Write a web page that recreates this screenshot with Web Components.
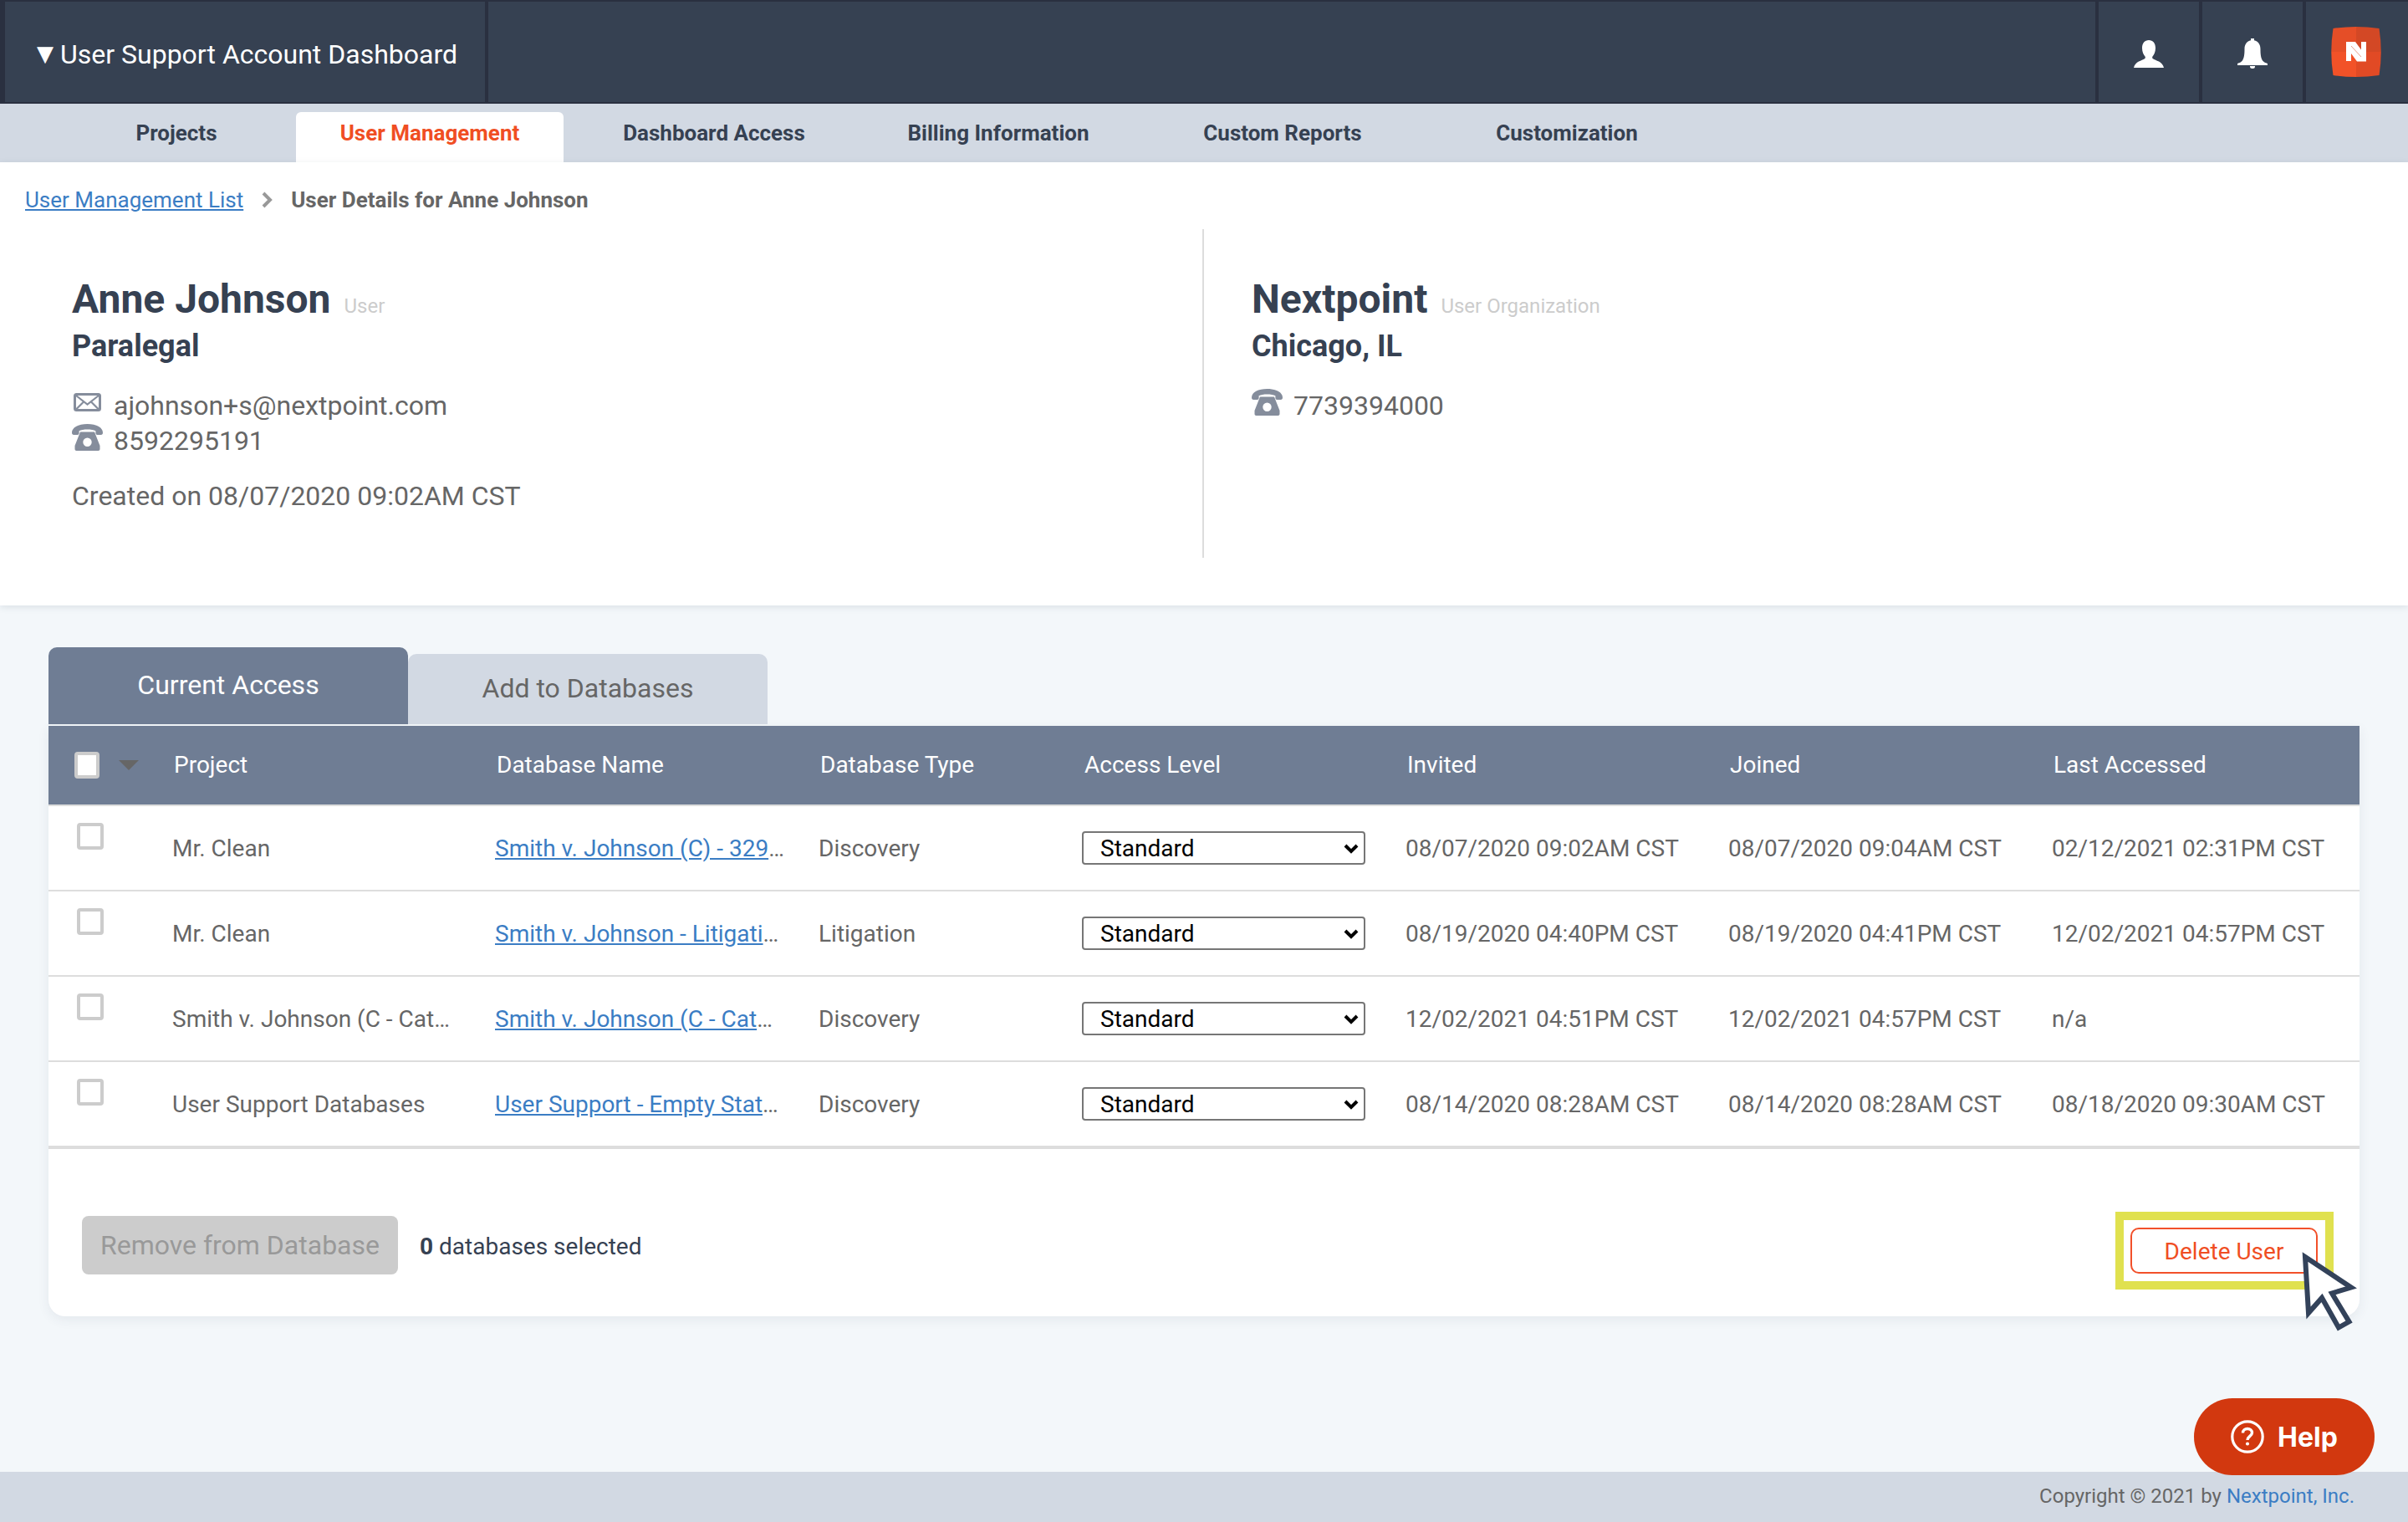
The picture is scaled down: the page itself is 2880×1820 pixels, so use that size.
<!DOCTYPE html>
<html lang="en"><head><meta charset="utf-8"><title>User Details</title>
<style>
html,body{margin:0;padding:0}
body{width:2880px;height:1820px;display:flex;flex-direction:column;font-family:Roboto,"Liberation Sans",sans-serif;background:#f3f7fa;position:relative;overflow:hidden}
</style></head><body>
<np-topbar title-text="User Support Account Dashboard"></np-topbar>
<np-nav>
  <np-nav-tab first>Projects</np-nav-tab>
  <np-nav-tab active>User Management</np-nav-tab>
  <np-nav-tab>Dashboard Access</np-nav-tab>
  <np-nav-tab>Billing Information</np-nav-tab>
  <np-nav-tab>Custom Reports</np-nav-tab>
  <np-nav-tab>Customization</np-nav-tab>
</np-nav>
<np-details>
  <np-breadcrumb slot="crumb" link="User Management List" current="User Details for Anne Johnson"></np-breadcrumb>
  <np-card slot="left" name="Anne Johnson" kind="User" sub="Paralegal">
    <np-contact icon="mail">ajohnson+s@nextpoint.com</np-contact>
    <np-contact icon="phone">8592295191</np-contact>
    <np-created>Created on 08/07/2020 09:02AM CST</np-created>
  </np-card>
  <np-card slot="right" name="Nextpoint" kind="User Organization" sub="Chicago, IL">
    <np-contact icon="phone">7739394000</np-contact>
  </np-card>
</np-details>
<np-main>
  <np-subtabs></np-subtabs>
  <np-panel>
    <np-thead></np-thead>
    <np-row project="Mr. Clean" db="Smith v. Johnson (C) - 329" type="Discovery" invited="08/07/2020 09:02AM CST" joined="08/07/2020 09:04AM CST" last="02/12/2021 02:31PM CST"></np-row>
    <np-row project="Mr. Clean" db="Smith v. Johnson - Litigati" type="Litigation" invited="08/19/2020 04:40PM CST" joined="08/19/2020 04:41PM CST" last="12/02/2021 04:57PM CST"></np-row>
    <np-row project="Smith v. Johnson (C - Cat…" db="Smith v. Johnson (C - Cat" type="Discovery" invited="12/02/2021 04:51PM CST" joined="12/02/2021 04:57PM CST" last="n/a"></np-row>
    <np-row project="User Support Databases" db="User Support - Empty Stat" type="Discovery" invited="08/14/2020 08:28AM CST" joined="08/14/2020 08:28AM CST" last="08/18/2020 09:30AM CST" final></np-row>
    <np-actions></np-actions>
  </np-panel>
</np-main>
<np-footer></np-footer>
<np-help></np-help>
<script>
const COLS='148px 386px 387px 316px 386px 386px 387px 368px';
function def(name,render){
  customElements.define(name,class extends HTMLElement{
    connectedCallback(){
      if(this.shadowRoot)return;
      this.attachShadow({mode:'open'}).innerHTML=render(this);
    }
  });
}
const a=(el,n)=>el.getAttribute(n)||'';
const ICONS={
 mail:`<svg width="33" height="22" viewBox="0 0 33 22" fill="none" stroke="#858d9c" style="margin:0 0 5px 2px"><rect x="1.500" y="1.500" width="30" height="19" rx="2" stroke-width="3"/><path d="M3 3 16.500 13.500 30 3M3 19.500 12 10.500M30 19.500 21 10.500" stroke-width="2.200"/></svg>`,
 phone:`<svg width="37" height="32" viewBox="0 0 37 32" fill="#858d9c"><path d="M0 10.500C0 4 8 0 18.500 0S37 4 37 10.500c0 1.600-.8 2.500-2.200 2.500h-4.400c-1.300 0-2-.8-2-2V8.300C26 7 22.500 6.500 18.500 6.500S11 7 8.600 8.300V11c0 1.200-.7 2-2 2H2.200C.8 13 0 12.100 0 10.500Z"/><path fill-rule="evenodd" d="M10 9.500h17L33.500 26v4c0 1.200-.8 2-2 2H5.500c-1.200 0-2-.8-2-2v-4ZM18.500 16.500a5.200 5.200 0 1 0 0 10.400 5.200 5.200 0 0 0 0-10.400Z"/></svg>`
};
def('np-topbar',el=>`<style>
:host{display:flex;height:124px;box-sizing:border-box;background:#2a3040;padding:2px 0 2px 6px;gap:4px;color:#fff;flex:none}
.c{background:#364152;display:flex;align-items:center;justify-content:center;width:120px;flex:none;box-sizing:border-box}
.t{width:574px;justify-content:flex-start;padding:6px 0 0 38px;font-size:32px;line-height:40px}
.a{font:26px "DejaVu Sans",sans-serif;margin-right:8px;position:relative;top:-1px}
.g{flex:1;width:auto}.l{width:122px}
.i{padding-top:4px}
</style>
<div class="c t"><span class="a">▼</span><span>${a(el,'title-text')}</span></div>
<div class="c g"></div>
<div class="c i"><svg width="36" height="33" viewBox="0 0 36 33" fill="#fff"><path d="M18 0c-5 0-8 3.800-8 9.500 0 4.500 1.800 8 3.500 10 .5.800.5 2-.5 2.800C10 24.500 1.500 25.500 0 33h36c-1.500-7.500-10-8.500-13-10.700-1-.8-1-2-.5-2.800 1.700-2 3.500-5.500 3.500-10C26 3.800 23 0 18 0Z"/></svg></div>
<div class="c i"><svg width="36" height="36" viewBox="0 0 36 36" fill="#fff"><path d="M16 0h4v2.300c4.800 1 7.500 5 7.500 10.200 0 6 .5 11.500 3 14.500 1 1.200 3 2.200 5.500 3v2H0v-2c2.500-.8 4.500-1.800 5.500-3 2.500-3 3-8.500 3-14.500C8.500 7.300 11.200 3.300 16 2.300Z"/><path d="M15 33h6v.500a3 2.500 0 0 1-6 0Z"/></svg></div>
<div class="c l"><svg width="60" height="60" viewBox="0 0 60 60" style="margin-right:2px"><defs><clipPath id="p"><path d="M2.500 2Q30-2 57.500 2 62 30 57.500 58 30 62 2.500 58-2 30 2.500 2Z"/></clipPath></defs><g clip-path="url(#p)"><rect width="30" height="30" fill="#e54e27"/><rect x="30" width="30" height="30" fill="#d34825"/><rect y="30" width="30" height="30" fill="#f25228"/><rect x="30" y="30" width="30" height="30" fill="#e14a25"/></g><path d="M18 18H29L36 27.500V18H42V41.500H31L24 32V41H18Z" fill="#fff"/><path d="M24 23 36 36" stroke="#e8a08c" stroke-width="1" fill="none"/></svg></div>`);
def('np-nav',()=>`<style>:host{display:flex;height:70px;box-sizing:border-box;padding:10px 0 0 88px;gap:20px;background:#d2d9e3;flex:none}</style><slot></slot>`);
def('np-nav-tab',el=>`<style>
:host{display:flex;width:${el.hasAttribute('first')?246:320}px;height:60px;box-sizing:border-box;padding-bottom:11px;align-items:center;justify-content:center;font-size:26px;font-weight:700;color:${el.hasAttribute('active')?'#f04e23':'#364152'};background:${el.hasAttribute('active')?'#fff':'transparent'};border-radius:6px 6px 0 0}
</style><slot></slot>`);
def('np-details',()=>`<style>
:host{display:block;height:530px;box-sizing:border-box;background:#fff;box-shadow:0 2px 8px rgba(50,65,85,.12);flex:none;position:relative;padding-top:26px;--ci:1px}
.cols{display:flex;margin-top:16px;height:393px}
.l{width:1438px;box-sizing:border-box;padding-left:86px}
.r{flex:1;border-left:2px solid #ddd;padding-left:57px}
</style><slot name="crumb"></slot><div class="cols"><div class="l"><slot name="left"></slot></div><div class="r"><slot name="right"></slot></div></div>`);
def('np-breadcrumb',el=>`<style>
:host{display:flex;align-items:center;height:38px;padding-left:30px;font-size:26px;color:#666}
a{color:#3b7dc4;text-decoration:underline}
svg{margin:0 22px 0 21px}
b{font-weight:700}
</style><a href="#">${a(el,'link')}</a><svg width="14" height="22" viewBox="0 0 14 22"><path d="M3 3l8 8-8 8" fill="none" stroke="#999" stroke-width="4"/></svg><b>${a(el,'current')}</b>`);
def('np-card',el=>`<style>
:host{display:block;padding-top:54px}
.h{display:flex;align-items:baseline;height:60px;line-height:60px;font-size:48px;font-weight:700;color:#364152}
.k{font-size:24px;font-weight:400;color:#ccc;margin-left:16px}
.s{font-size:36px;font-weight:700;line-height:44px;margin-top:4px;color:#364152;margin-bottom:28px}
</style><div class="h"><span>${a(el,'name')}</span><span class="k">${a(el,'kind')}</span></div><div class="s">${a(el,'sub')}</div><slot></slot>`);
def('np-contact',el=>`<style>
:host{display:flex;height:42px;line-height:42px;font-size:32px;color:#666;position:relative;margin-left:var(--ci)}
.i{width:50px;flex:none;display:flex;align-items:flex-end;height:33px;margin-left:-1px}
</style><span class="i">${ICONS[a(el,'icon')]}</span><span><slot></slot></span>`);
def('np-created',()=>`<style>:host{display:block;line-height:42px;font-size:32px;color:#666;margin-top:24px}</style><slot></slot>`);
def('np-main',()=>`<style>:host{display:block;flex:1;padding:50px 58px 0;box-sizing:border-box}</style><slot></slot>`);
def('np-subtabs',()=>`<style>
:host{display:flex;align-items:flex-end;height:92px;margin-bottom:2px}
div{box-sizing:border-box;text-align:center;line-height:40px;font-size:32px;border-radius:10px 10px 0 0}
.on{width:430px;height:92px;background:#6f7d94;color:#fff;padding-top:25px}
.off{width:430px;height:84px;background:#d2d9e3;color:#666;padding-top:21px}
</style><div class="on">Current Access</div><div class="off">Add to Databases</div>`);
def('np-panel',()=>`<style>:host{display:block;background:#fff;border-radius:0 0 20px 20px;box-shadow:0 4px 14px rgba(50,65,85,.08);height:706px}</style><slot></slot>`);
def('np-thead',()=>`<style>
:host{display:grid;grid-template-columns:${COLS};height:96px;box-sizing:border-box;background:#6f7d94;border-bottom:2px solid #ddd;color:#fff;font-size:28px;align-items:center}
span{padding:0 0 2px 2px}
.s{padding:0;display:flex;align-items:center}
.b{width:30px;height:32px;box-sizing:border-box;background:#fff;border:4px solid #ccc;border-radius:4px;margin-left:31px}
.t{width:0;height:0;border:12px solid transparent;border-top-color:#666;border-bottom:0;margin-left:23px}
</style><div class="s"><div class="b"></div><div class="t"></div></div><span>Project</span><span>Database Name</span><span>Database Type</span><span>Access Level</span><span>Invited</span><span>Joined</span><span>Last Accessed</span>`);
def('np-row',el=>`<style>
:host{display:grid;grid-template-columns:${COLS};height:102px;box-sizing:border-box;border-bottom:${el.hasAttribute('final')?4:2}px solid #ddd;font-size:28px;color:#666;align-items:center;${el.hasAttribute('final')?'height:104px':''}}
.c{width:32px;height:32px;box-sizing:border-box;border:4px solid #ccc;border-radius:4px;margin:20px 0 0 34px;align-self:start}
a{color:#3b7dc4;text-decoration:underline}
select{appearance:none;-webkit-appearance:none;width:339px;height:40px;box-sizing:border-box;border:2px solid #767676;border-radius:4px;background:#fff;color:#000;font:28px Roboto,sans-serif;padding:0 0 0 20px;display:block}
.w{position:relative;width:339px;margin-left:-1px}
.w svg{position:absolute;right:8px;top:15px}
</style><div class="c"></div><span>${a(el,'project')}</span><span><a href="#">${a(el,'db')}</a>…</span><span>${a(el,'type')}</span>
<div class="w"><select><option>Standard</option></select><svg width="18" height="12" viewBox="0 0 18 12"><path d="M2 2l7 7 7-7" fill="none" stroke="#000" stroke-width="4"/></svg></div>
<span>${a(el,'invited')}</span><span>${a(el,'joined')}</span><span>${a(el,'last')}</span>`);
def('np-actions',()=>`<style>
:host{display:flex;align-items:flex-start;padding:75px 31px 0 40px}
.r{height:70px;width:378px;box-sizing:border-box;margin-top:5px;background:#ccc;border-radius:8px;color:#999;font-size:32px;display:flex;align-items:center;justify-content:center;font-weight:400}
.n{height:70px;margin:6px auto 0 26px;display:flex;align-items:center;font-size:28px;color:#364152;white-space:pre}
b{font-weight:700}
.f{position:relative;border:10px solid #e0e14f;box-sizing:border-box;width:261px;height:93px;padding:9px 8px;background:#fff}
.d{width:224px;height:55px;box-sizing:border-box;border:2px solid #f2502a;border-radius:10px;color:#f04e23;font-size:28px;display:flex;align-items:center;justify-content:center;padding-top:1px}
svg{position:absolute;left:210px;top:35px}
</style><div class="r">Remove from Database</div><div class="n"><b>0</b> databases selected</div><div class="f"><div class="d">Delete User</div><svg width="75" height="101" viewBox="0 0 75 101"><path d="M7 9 62 45.500 39 52.500 59.500 86.500 47 93.500 27 58 11 76Z" fill="#fff" stroke="#33425a" stroke-width="6"/></svg></div>`);
def('np-footer',()=>`<style>
:host{display:flex;height:60px;box-sizing:border-box;flex:none;background:#d2d9e3;justify-content:flex-end;align-items:center;padding:0 64px 2px 0;font-size:24px;color:#666}
a{color:#3b7dc4;text-decoration:none}
</style><span>Copyright © 2021 by <a href="#">Nextpoint, Inc.</a></span>`);
def('np-help',()=>`<style>
:host{position:absolute;left:2624px;top:1672px;width:216px;height:92px;border-radius:46px;background:#d2380f;color:#fff;display:flex;align-items:center;box-sizing:border-box;padding-left:44px;font:700 32px Inter,Roboto,sans-serif}
svg{margin-right:16px}
</style><svg width="40" height="40" viewBox="0 0 40 40" fill="none" stroke="#fff" stroke-width="3.200"><circle cx="20" cy="20" r="18.200"/><path d="M14.500 15.500c0-3 2.500-5 5.500-5s5.500 2 5.500 4.800c0 4-5.500 4.200-5.500 8.700" stroke-width="3.400"/><circle cx="20" cy="28.500" r="1.300" fill="#fff" stroke-width="1.500"/></svg><span>Help</span>`);
</script>
</body></html>
